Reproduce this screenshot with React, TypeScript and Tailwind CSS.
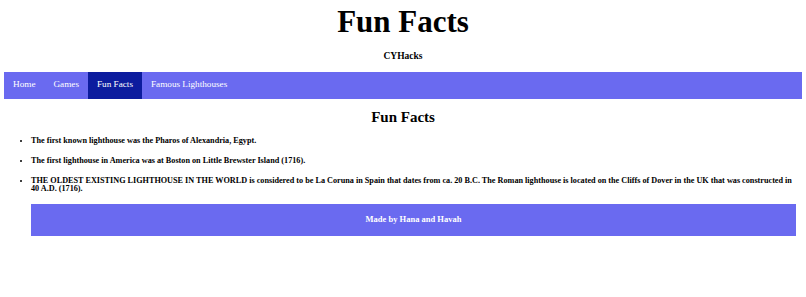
export default function App() {
  const serif = { fontFamily: '"Liberation Serif", "DejaVu Serif", serif' };
  const facts = [
    "The first known lighthouse was the Pharos of Alexandria, Egypt.",
    "The first lighthouse in America was at Boston on Little Brewster Island (1716).",
    "THE OLDEST EXISTING LIGHTHOUSE IN THE WORLD is considered to be La Coruna in Spain that dates from ca. 20 B.C. The Roman lighthouse is located on the Cliffs of Dover in the UK that was constructed in 40 A.D. (1716).",
  ];

  return (
    <div className="w-[806px] h-[297px] bg-white text-black" style={serif}>
      {/* Header */}
      <h1 className="text-center text-[31px] font-bold leading-none pt-[6px]">
        Fun Facts
      </h1>
      <p className="text-center text-[9.5px] font-bold mt-[15px] leading-none">
        CYHacks
      </p>

      {/* Nav */}
      <nav className="mx-[4px] mt-[10px] h-[27px] flex bg-[#6a6af0] text-[9.2px] text-white">
        <a className="px-[9px] flex items-center">Home</a>
        <a className="px-[9px] flex items-center">Games</a>
        <a className="px-[9px] flex items-center bg-[#0c1c9e]">Fun Facts</a>
        <a className="px-[9px] flex items-center">Famous Lighthouses</a>
      </nav>

      {/* Content */}
      <h2 className="text-center text-[15px] font-bold leading-none mt-[11px]">
        Fun Facts
      </h2>
      <ul className="list-disc pl-[31px] pr-[6px] mt-[12px] text-[8.2px] font-bold leading-[8px] flex flex-col gap-[12px]">
        {facts.map((f) => (
          <li key={f}>{f}</li>
        ))}
      </ul>

      {/* Footer */}
      <footer className="ml-[31px] mr-[10px] mt-[11px] h-[32px] flex items-center justify-center bg-[#6a6af0] text-white text-[8.5px] font-bold">
        Made by Hana and Havah
      </footer>
    </div>
  );
}
